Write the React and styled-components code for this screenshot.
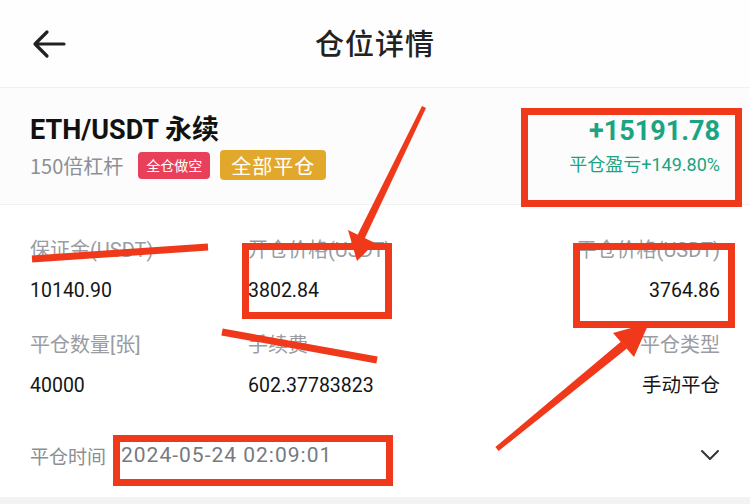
import React from "react";
import styled, { createGlobalStyle } from "styled-components";

const Global = createGlobalStyle`
  body {
    margin: 0;
    background: #fff;
    font-family: "Noto Sans CJK SC", sans-serif;
  }
`;

const Page = styled.div`
  position: relative;
  width: 750px;
  height: 504px;
  overflow: hidden;
  background: #fff;
`;

const Header = styled.div`
  height: 88px;
  display: grid;
  grid-template-columns: 100px 1fr 100px;
  align-items: center;
  padding: 0 30px;
  box-sizing: border-box;
  background: #fefefe;
  border-bottom: 1px solid #eef2f0;
`;

const Title = styled.h1`
  margin: 0 0 4px;
  text-align: center;
  font-size: 29px;
  font-weight: 500;
  color: #222;
  letter-spacing: 1px;
`;

const Summary = styled.div`
  height: 117px;
  padding: 0 30px;
  box-sizing: border-box;
  display: flex;
  justify-content: space-between;
  background: #fbfcfb;
  border-bottom: 1px solid #f0f2f1;
`;

const Col = styled.div`
  display: flex;
  flex-direction: column;
  align-items: ${(p) => (p.right ? "flex-end" : "flex-start")};
  padding-top: ${(p) => (p.right ? 26 : 25)}px;
`;

const Pair = styled.div`
  font-family: Roboto, "Noto Sans CJK SC", sans-serif;
  font-weight: 700;
  font-size: 27px;
  line-height: 34px;
  color: #111;
`;

const Sub = styled.div`
  margin-top: 2px;
  display: flex;
  align-items: center;
  gap: 10px;
  height: 32px;
`;

const Lev = styled.span`
  font-size: 20px;
  color: #8b8f96;
  margin-right: 5px;
`;

const Badge = styled.span`
  display: inline-flex;
  align-items: center;
  justify-content: center;
  height: ${(p) => (p.big ? 30 : 27)}px;
  padding: 0 ${(p) => (p.big ? 11 : 8)}px;
  border-radius: 4px;
  font-size: ${(p) => (p.big ? 20 : 14)}px;
  letter-spacing: ${(p) => (p.big ? 1 : 0)}px;
  color: #fff;
  background: ${(p) => p.bg};
`;

const Amount = styled.div`
  font-family: Roboto, sans-serif;
  font-weight: 700;
  font-size: 27px;
  line-height: 34px;
  color: #1aa481;
`;

const Pct = styled.div`
  margin-top: 3px;
  font-size: 18px;
  line-height: 28px;
  color: #1aa481;
  font-family: Roboto, "Noto Sans CJK SC", sans-serif;
`;

const Grid = styled.div`
  display: grid;
  grid-template-columns: 218px 1fr auto;
  row-gap: 27px;
  padding: 32px 30px 0;
`;

const Cell = styled.div`
  display: flex;
  flex-direction: column;
  align-items: ${(p) => (p.right ? "flex-end" : "flex-start")};
`;

const Label = styled.div`
  font-size: 20px;
  line-height: 26px;
  color: #999ca2;
  font-family: Roboto, "Noto Sans CJK SC", sans-serif;
`;

const Value = styled.div`
  margin-top: 14px;
  font-size: 19.5px;
  line-height: 28px;
  color: #151515;
  font-family: Roboto, "Noto Sans CJK SC", sans-serif;
`;

const Footer = styled.div`
  margin-top: 35px;
  height: 40px;
  padding: 0 30px;
  display: flex;
  align-items: center;
  justify-content: space-between;
`;

const TimeRow = styled.div`
  display: flex;
  align-items: center;
  gap: 15px;
  font-size: 19px;
  color: #8b8e94;
`;

const Time = styled.span`
  font-family: Roboto, sans-serif;
  font-size: 21px;
  letter-spacing: 1px;
  color: #777a80;
`;

const Band = styled.div`
  position: absolute;
  left: 0;
  right: 0;
  bottom: 0;
  height: 7px;
  background: #f3f3f3;
`;

const Marks = styled.svg`
  position: absolute;
  left: 0;
  top: 0;
  pointer-events: none;
`;

const RED = "#f0391b";

const BackArrow = () => (
  <svg width="38" height="30" viewBox="0 0 38 30">
    <path d="M34 15H5M17 3L5 15l12 12" fill="none" stroke="#222" strokeWidth="3.2" strokeLinecap="round" strokeLinejoin="round" />
  </svg>
);

const Chevron = () => (
  <svg width="20" height="12" viewBox="0 0 20 12">
    <path d="M2 2l8 8 8-8" fill="none" stroke="#333" strokeWidth="2" strokeLinecap="round" strokeLinejoin="round" />
  </svg>
);

const cells = [
  { label: "保证金(USDT)", value: "10140.90" },
  { label: "开仓价格(USDT)", value: "3802.84" },
  { label: "平仓价格(USDT)", value: "3764.86", right: true },
  { label: "平仓数量[张]", value: "40000" },
  { label: "手续费", value: "602.37783823" },
  { label: "平仓类型", value: "手动平仓", right: true },
];

export default function App() {
  return (
    <Page>
      <Global />
      <Header>
        <BackArrow />
        <Title>仓位详情</Title>
        <span />
      </Header>
      <Summary>
        <Col>
          <Pair>ETH/USDT 永续</Pair>
          <Sub>
            <Lev>150倍杠杆</Lev>
            <Badge bg="#e8405a">全仓做空</Badge>
            <Badge big bg="#e2a82b">全部平仓</Badge>
          </Sub>
        </Col>
        <Col right>
          <Amount>+15191.78</Amount>
          <Pct>平仓盈亏+149.80%</Pct>
        </Col>
      </Summary>
      <Grid>
        {cells.map((c) => (
          <Cell key={c.label} right={c.right}>
            <Label>{c.label}</Label>
            <Value>{c.value}</Value>
          </Cell>
        ))}
      </Grid>
      <Footer>
        <TimeRow>
          平仓时间
          <Time>2024-05-24 02:09:01</Time>
        </TimeRow>
        <Chevron />
      </Footer>
      <Band />

      <Marks width="750" height="504" viewBox="0 0 750 504">
        <g fill="none" stroke={RED} strokeWidth="7">
          <rect x="524.5" y="111.5" width="214" height="92" />
          <rect x="245.5" y="246.5" width="143" height="69" />
          <rect x="576.5" y="246.5" width="155" height="78" />
          <rect x="116.5" y="438.5" width="273" height="44" />
          <line x1="32" y1="259" x2="208" y2="247" />
          <line x1="222" y1="332" x2="377" y2="360" />
        </g>
        <g fill={RED}>
          <polygon points="422,106 426,108 364.6,238.7 357.4,235.3" />
          <polygon points="348,230 375,243 357,261" />
          <polygon points="498.6,450.9 495.4,447.1 621.1,341.5 626.9,348.5" />
          <polygon points="613,333 634,357 649,323" />
        </g>
      </Marks>
    </Page>
  );
}
